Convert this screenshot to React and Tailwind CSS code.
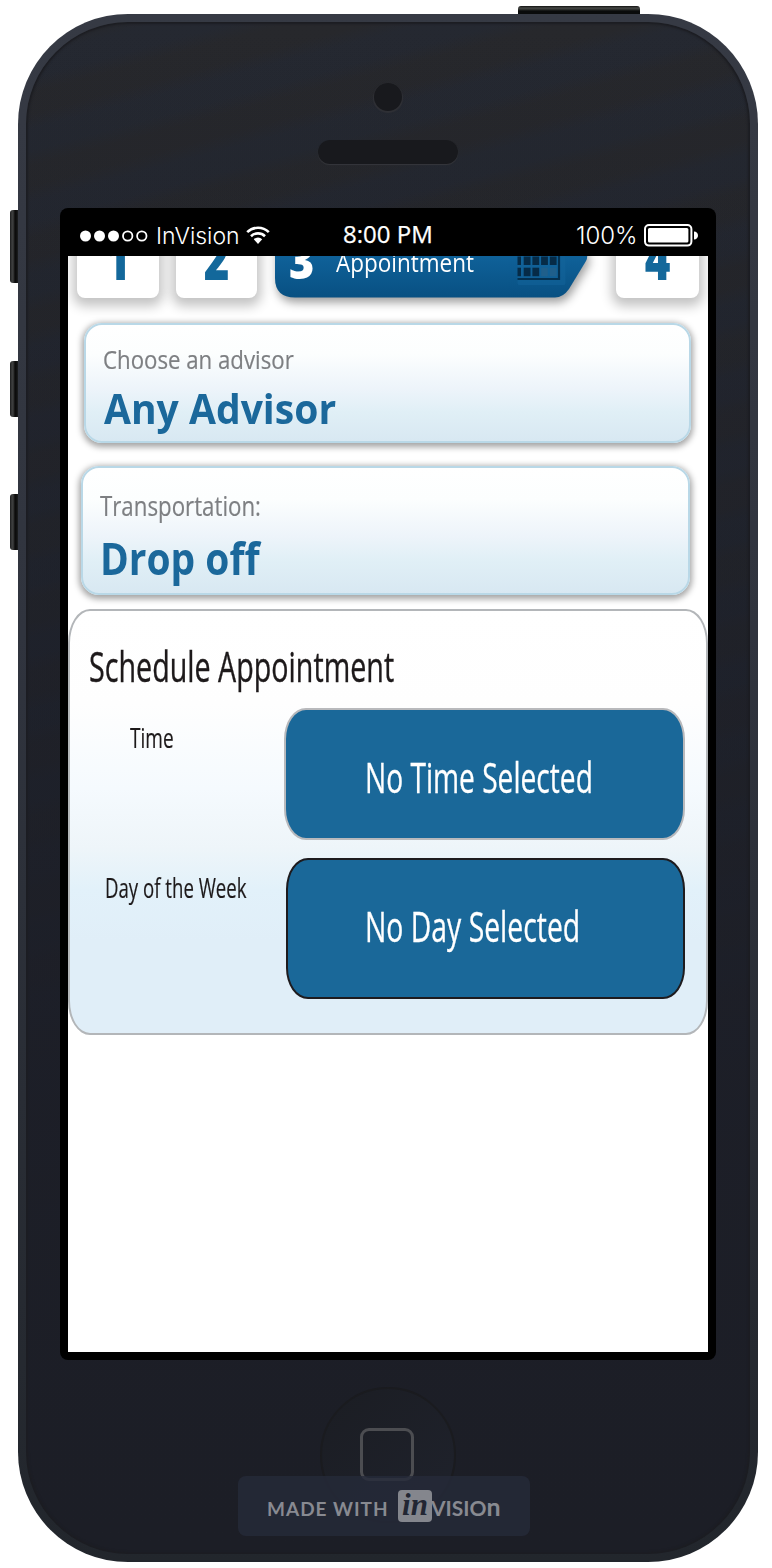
import React from "react";

function SideKey({ className }) {
  return (
    <div
      className={
        "absolute left-[10px] w-[10px] rounded-l-[3px] bg-[linear-gradient(90deg,#1a1b1c_0,#3c3d3d_2px,#3c3d3d_3px,#0c0c0c_5px,#0c0c0c_6px,#1d1f20_8px)] " +
        className
      }
    />
  );
}

function StatusBar() {
  return (
    <div className="relative z-10 grid h-[48px] grid-cols-[1fr_auto_1fr] items-start bg-black text-white">
      <div className="flex items-center pl-[12px] pt-[8px]">
        <svg width="68" height="14" viewBox="0 0 68 14" className="-mt-[1px]">
          <circle cx="5.5" cy="7" r="5.5" fill="#fff" />
          <circle cx="19.5" cy="7" r="5.5" fill="#fff" />
          <circle cx="33.5" cy="7" r="5.5" fill="#fff" />
          <circle cx="47.7" cy="7" r="4.7" fill="none" stroke="#fff" strokeWidth="1.8" />
          <circle cx="61.8" cy="7" r="4.7" fill="none" stroke="#fff" strokeWidth="1.8" />
        </svg>
        <span className="ml-[8px] w-[82px] origin-left whitespace-nowrap font-['Inter',sans-serif] text-[23px] font-light leading-[40px]">
          InVision
        </span>
        <svg width="24" height="19" viewBox="0 0 24 19" className="-mt-[2px] ml-[8px]">
          <path d="M1.2 6.2a15.300 15.300 0 0 1 21.600 0" fill="none" stroke="#fff" strokeWidth="2.6" />
          <path d="M5 10.200a10 10 0 0 1 14 0" fill="none" stroke="#fff" strokeWidth="2.6" />
          <path d="M7.800 13.200a6 6 0 0 1 8.400 0L12 18z" fill="#fff" />
        </svg>
      </div>
      <span className="w-[90px] whitespace-nowrap pt-[7px] font-['Open_Sans',sans-serif] text-[24px] leading-[38px] [-webkit-text-stroke:0.25px_#fff]">
        8:00 PM
      </span>
      <div className="flex items-center justify-end pr-[10px] pt-[8px]">
        <span className="mr-[7px] w-[62px] origin-left whitespace-nowrap pl-[1px] font-['Inter',sans-serif] text-[24px] font-light leading-[40px]">
          100%
        </span>
        <svg width="54" height="24" viewBox="0 0 54 24">
          <rect x="1" y="1" width="46.4" height="20.6" rx="4" fill="none" stroke="#fff" strokeWidth="2" />
          <rect x="4" y="4" width="40.4" height="14.600" rx="1.5" fill="#fff" />
          <path d="M50 7.500c2.500 0 4 2 4 4s-1.500 4-4 4z" fill="#fff" />
        </svg>
      </div>
    </div>
  );
}

function StepCard({ n, className }) {
  return (
    <div
      className={
        "flex h-[82px] justify-center rounded-[8px] bg-white pt-[11px] font-['Open_Sans',sans-serif] text-[60px] font-extrabold leading-none text-[#13689b] shadow-[0_4px_12px_4px_rgba(0,0,0,0.24)] " +
        className
      }
    >
      <span className="scale-x-[0.73]">{n}</span>
    </div>
  );
}

function ActiveStep() {
  return (
    <div className="relative ml-[18px] h-[82px] w-[313px]">
      <svg
        width="313"
        height="82"
        viewBox="0 0 313 82"
        className="absolute left-0 top-0 overflow-visible drop-shadow-[2px_5px_5px_rgba(0,0,0,0.38)]"
      >
        <defs>
          <linearGradient id="step" x1="0" y1="0" x2="0" y2="1">
            <stop offset="0" stopColor="#1269a0" />
            <stop offset="0.5" stopColor="#0f6199" />
            <stop offset="1" stopColor="#085082" />
          </linearGradient>
        </defs>
        <path
          d="M18 0H283q8 0 12 7l16 28q2.500 5 0 10L294 73q-6 8.500-14 8.500H20Q0 81.500 0 62V20Q0 0 18 0z"
          fill="url(#step)"
        />
        <rect x="242.500" y="20" width="48" height="49" rx="2" fill="#14649a" opacity="0.55" />
        <path d="M242.500 63H284V20" fill="none" stroke="#04304f" strokeWidth="2.200" />
        {[0, 1].map((r) =>
          [0, 1, 2, 3, 4].map((c) => (
            <rect
              key={r + "-" + c}
              x={c === 0 ? 242.5 : 240 + c * 8.7}
              y={40.500 + r * 11.200}
              width={c === 0 ? 3.5 : 6.800}
              height={8.500}
              fill={r === 1 && c > 2 ? "#1f5f8b" : "#062b47"}
            />
          ))
        )}
      </svg>
      <div className="relative flex items-start font-['Open_Sans',sans-serif] leading-none text-white">
        <span className="ml-[14px] mt-[20px] w-[26px] origin-left scale-x-[0.88] text-[49px] font-extrabold">
          3
        </span>
        <span className="ml-[21px] mt-[34px] origin-left scale-x-[0.9] text-[25px]">
          Appointment
        </span>
      </div>
    </div>
  );
}

function Steps() {
  return (
    <div className="-mt-[40px] flex pl-[9px]">
      <StepCard n="1" className="w-[82px]" />
      <StepCard n="2" className="ml-[17px] w-[81px]" />
      <ActiveStep />
      <StepCard n="4" className="ml-[28px] w-[83px]" />
    </div>
  );
}

const cardBase =
  "rounded-[18px] border-2 border-[#b9d8e7] bg-[linear-gradient(180deg,#fff_0%,#fcfefe_25%,#edf4fa_55%,#e0eff6_75%,#d8e8f2_100%)] font-['Open_Sans',sans-serif] leading-none whitespace-nowrap shadow-[0_2px_6px_2px_rgba(0,0,0,0.36)] ";

function Schedule() {
  return (
    <section className="mt-[14px] h-[426px] w-[640px] rounded-[22px/34px] border-2 border-[#b3b6b9] bg-[linear-gradient(180deg,#fff_0%,#fefefe_22%,#f5fafe_42%,#eef5f9_56%,#e2f1fa_66%,#e0eef8_78%,#e0eef8_100%)] pt-[34px] font-['Open_Sans',sans-serif] leading-none text-[#1d191a] whitespace-nowrap">
      <h1 className="ml-[19px] w-max origin-left scale-x-[0.683] text-[42px] [-webkit-text-stroke:0.4px_#1d191a]">Schedule Appointment</h1>
      <div className="mt-[21px] flex">
        <div className="w-[214px] pl-[60px] pt-[15px]">
          <span className="block w-max origin-left scale-x-[0.68] text-[28px] [-webkit-text-stroke:0.2px_#1d191a]">Time</span>
        </div>
        <button className="flex h-[132px] w-[401px] rounded-[22px/31px] border-2 border-[#b8b9bc] bg-[#1a6899] pl-[79px] pt-[46px] text-[42px] leading-none text-white">
          <span className="origin-left scale-x-[0.67] [-webkit-text-stroke:0.3px_#fff]">No Time Selected</span>
        </button>
      </div>
      <div className="mt-[18px] flex">
        <div className="w-[216px] pl-[35px] pt-[15px]">
          <span className="block w-max origin-left scale-x-[0.665] text-[28px] [-webkit-text-stroke:0.2px_#1d191a]">Day of the Week</span>
        </div>
        <button className="flex h-[141px] w-[399px] rounded-[22px/31px] border-2 border-[#1e1b1e] bg-[#1a6899] pl-[77px] pt-[45px] text-[42px] leading-none text-white">
          <span className="origin-left scale-x-[0.675] [-webkit-text-stroke:0.3px_#fff]">No Day Selected</span>
        </button>
      </div>
    </section>
  );
}

function Badge() {
  return (
    <div className="absolute bottom-[18px] left-[212px] flex h-[60px] w-[292px] items-start rounded-[8px] bg-[#262b39]/80 pl-[29px] font-['Lato',sans-serif] font-bold leading-none text-[#888a91]">
      <span className="mt-[23px] w-[131px] whitespace-nowrap text-[19px] tracking-[1px]">MADE WITH</span>
      <span className="mt-[14px] flex h-[32px] w-[34px] items-start justify-center rounded-[4px] bg-[#84868d] font-['Liberation_Serif',serif] text-[31px] italic leading-[30px] text-[#222633]">
        in
      </span>
      <span className="-ml-[1px] mt-[18px] flex items-baseline whitespace-nowrap">
        <span className="text-[21px]">VISIO</span>
        <span className="text-[25px] leading-none">n</span>
      </span>
    </div>
  );
}

export default function App() {
  return (
    <main className="relative h-[1568px] w-[772px] overflow-hidden bg-white pl-[18px] pt-[14px]">
      <div className="absolute left-[518px] top-[6px] h-[10px] w-[122px] rounded-t-[3px] bg-[linear-gradient(180deg,#111_0,#454744_2px,#3a3c3a_3px,#0a0b0b_5px)]" />
      <SideKey className="top-[210px] h-[73px]" />
      <SideKey className="top-[361px] h-[56px]" />
      <SideKey className="top-[494px] h-[56px]" />
      <div className="relative h-[1548px] w-[740px] rounded-[110px] bg-[linear-gradient(180deg,#363a44_0%,#30343e_40%,#22262c_100%)] p-[8px]">
        <div className="relative flex h-[1532px] w-[724px] flex-col items-center rounded-[102px] bg-[linear-gradient(180deg,transparent_0%,rgba(28,30,39,0.9)_70%,#1c1e26_100%),repeating-linear-gradient(165deg,rgba(42,40,38,0.25)_0,rgba(42,40,38,0.25)_20px,rgba(34,42,58,0.25)_35px,rgba(34,42,58,0.25)_55px,rgba(42,40,38,0.25)_70px),linear-gradient(180deg,#26282e_0%,#20232a_50%,#1b1d26_100%)] shadow-[inset_0_0_2px_2px_#1c1d22]">
          <div className="mt-[61px] h-[28px] w-[28px] rounded-full bg-[#18191d] shadow-[0_1px_1px_1px_#303136]" />
          <div className="mt-[29px] h-[24px] w-[140px] rounded-full bg-[#18191d] shadow-[0_1px_1px_0_#36373c]" />
          <div className="mt-[44px] h-[1152px] w-[656px] rounded-[8px] bg-black px-[8px] pb-[8px]">
            <StatusBar />
            <div className="h-[1096px] overflow-hidden bg-white">
              <Steps />
              <section className={cardBase + "ml-[16px] mt-[25px] h-[120px] w-[607px] pl-[17px] pt-[21px]"}>
                <p className="w-max origin-left scale-x-[0.855] text-[26px] text-[#7d7f82] [-webkit-text-stroke:0.2px_#7d7f82]">
                  Choose an advisor
                </p>
                <p className="ml-[1px] mt-[15px] w-max origin-left scale-x-[0.93] text-[42px] font-bold text-[#1b689b]">
                  Any Advisor
                </p>
              </section>
              <section className={cardBase + "ml-[13px] mt-[23px] h-[129px] w-[609px] pl-[17px] pt-[24px]"}>
                <p className="w-max origin-left scale-x-[0.825] text-[27px] text-[#7d7f82] [-webkit-text-stroke:0.2px_#7d7f82]">
                  Transportation:
                </p>
                <p className="mt-[16px] w-max origin-left scale-x-[0.865] text-[45px] font-bold text-[#1b689b]">
                  Drop off
                </p>
              </section>
              <Schedule />
            </div>
          </div>
          <div className="mt-[27px] flex h-[136px] w-[136px] items-center justify-center rounded-full border-2 border-[#1a1b1f] bg-[linear-gradient(135deg,#1b1d23,#1f222c)]">
            <div className="-ml-[2px] -mt-[1px] h-[53px] w-[54px] rounded-[9px] border-[3px] border-[#4c4d51]" />
          </div>
          <Badge />
        </div>
      </div>
    </main>
  );
}
